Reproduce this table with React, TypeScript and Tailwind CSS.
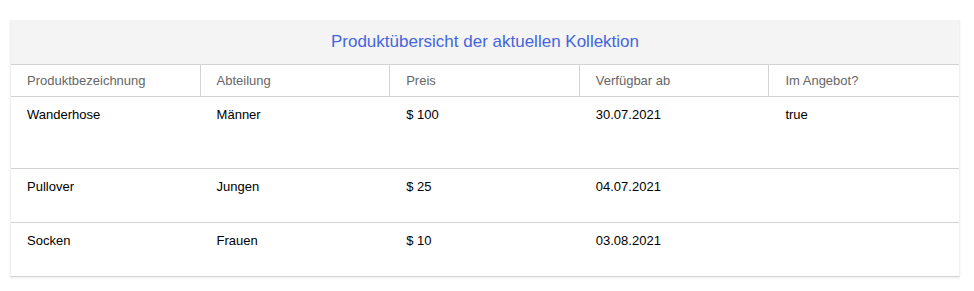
import React from "react";

const cols = ["Produktbezeichnung", "Abteilung", "Preis", "Verfügbar ab", "Im Angebot?"];
const rows = [
  { cells: ["Wanderhose", "Männer", "$ 100", "30.07.2021", "true"], h: "h-[72px]" },
  { cells: ["Pullover", "Jungen", "$ 25", "04.07.2021", ""], h: "h-[54px]" },
  { cells: ["Socken", "Frauen", "$ 10", "03.08.2021", ""], h: "h-[53px]" },
];

export default function App() {
  return (
    <div className="w-[974px] h-[291px] bg-white pt-[20px] pl-[10px]" style={{ fontFamily: '"Liberation Sans", Arial, sans-serif' }}>
      <div className="w-[950px] border-x border-[#f0f0f0] border-b border-b-[#d4d4d4] shadow-[0_1px_2px_rgba(0,0,0,0.08)]">
        <div className="h-[45px] bg-[#f4f4f4] border-b border-[#d3d3d3] flex items-center justify-center text-[17px] text-[#4466dd]">
          Produktübersicht der aktuellen Kollektion
        </div>
        <div className="grid grid-cols-5 h-[32px] border-b border-[#d3d3d3]">
          {cols.map((c, i) => (
            <div key={c} className={`flex items-center pl-[16px] text-[13px] text-[#666666] ${i < 4 ? "border-r border-[#d3d3d3]" : ""}`}>
              {c}
            </div>
          ))}
        </div>
        {rows.map((r, ri) => (
          <div key={ri} className={`grid grid-cols-5 ${r.h} ${ri < rows.length - 1 ? "border-b border-[#d3d3d3]" : ""}`}>
            {r.cells.map((c, i) => (
              <div key={i} className="pl-[16px] pt-[10px] text-[13px] leading-[15px] text-black">
                {c}
              </div>
            ))}
          </div>
        ))}
      </div>
    </div>
  );
}
